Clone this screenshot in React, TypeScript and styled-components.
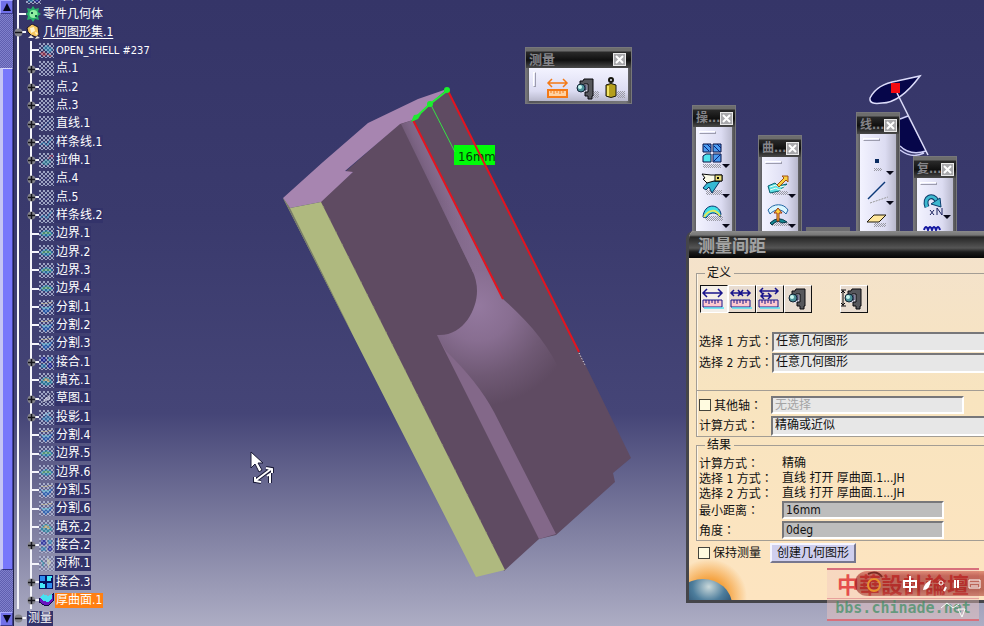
import React from "react";
import styled, { createGlobalStyle, css } from "styled-components";

const Global = createGlobalStyle`
  * { box-sizing: border-box; }
  body {
    margin: 0;
    overflow: hidden;
    font: 12px/15px "DejaVu Sans Condensed", "Noto Sans CJK SC", sans-serif;
    color: #111;
  }
  button, input, select { font: inherit; color: inherit; margin: 0; }
  ul { list-style: none; margin: 0; padding: 0; }
`;

const Workspace = styled.main`
  position: relative;
  display: flex;
  height: 100vh;
  overflow: hidden;
  background: linear-gradient(#353568 0%, #3a3a6d 35%, #454577 66%, #77779b 82%, #adadc4 100%);
`;

/* ---------- scroll bar ---------- */

const ScrollBar = styled.div`
  display: flex;
  flex-direction: column;
  width: 14px;
  flex: none;
  border-right: 1px solid #22224c;
  background: repeating-conic-gradient(#5f5fb0 0% 25%, #8080cc 0% 50%) 0 0 / 2px 2px;
`;

const ScrollButton = styled.button`
  height: 14px;
  padding: 0;
  border: 1px solid;
  border-color: #aaaaff #3c3c88 #3c3c88 #aaaaff;
  background: #7070e8;
  display: grid;
  place-items: center;
`;

const ScrollTrack = styled.div`
  flex: 1;
  display: grid;
  grid-template-rows: 54fr 502fr 42fr;
`;

const ScrollThumb = styled.div`
  grid-row: 2;
  background: #7777fb;
  border: 1px solid;
  border-width: 1px 1px 1px 3px;
  border-color: #d8d8ff #4040a0 #30307a #c4c4f4;
`;

/* ---------- specification tree ---------- */

const Tree = styled.ul`
  flex: none;
  margin: -13px 0 0 3px;
  color: #fff;
  white-space: nowrap;
`;

const Branch = styled.li<{ $last?: boolean }>`
  border-left: 2px solid ${(p) => (p.$last ? "transparent" : "#f4f4fa")};
`;

const Leaves = styled.ul`
  margin-left: 11px;
  border-left: 2px solid #f4f4fa;

  & > li:nth-child(3n + 2) { height: 19px; }
`;

const Row = styled.div`
  display: flex;
  align-items: center;
  height: 18px;
`;

const Leaf = styled.li`
  display: flex;
  align-items: center;
  height: 18px;
`;

const Tick = styled.span`
  width: 7px;
  height: 2px;
  flex: none;
  background: #f4f4fa;
  position: relative;
`;

const Expander = styled.button`
  position: absolute;
  left: -5px;
  top: -3px;
  width: 9px;
  height: 9px;
  padding: 0;
  border: 0;
  background: none;
  svg { display: block; }
`;

const Label = styled.span<{ $kind?: "current" | "selected" | "latin" }>`
  margin-left: 1px;
  padding: 0 1px;
  line-height: 15px;
  background: #33336a;
  ${(p) => p.$kind === "current" && css`text-decoration: underline; text-underline-offset: 2px;`}
  ${(p) => p.$kind === "selected" && css`background: #ff7f11;`}
  ${(p) => p.$kind === "latin" && css`font-size: 11px;`}
`;

const Glyph = styled.svg`
  display: block;
  flex: none;
`;

type Kind = "shell" | "point" | "line" | "spline" | "extrude" | "edge" | "split" | "join" | "fill" | "sketch" | "project" | "mirror" | "joinOn" | "thick";

const leaves: [string, Kind, boolean][] = [
  ["OPEN_SHELL #237", "shell", false],
  ["点.1", "point", true],
  ["点.2", "point", true],
  ["点.3", "point", true],
  ["直线.1", "line", true],
  ["样条线.1", "spline", true],
  ["拉伸.1", "extrude", true],
  ["点.4", "point", true],
  ["点.5", "point", true],
  ["样条线.2", "spline", true],
  ["边界.1", "edge", false],
  ["边界.2", "edge", false],
  ["边界.3", "edge", false],
  ["边界.4", "edge", false],
  ["分割.1", "split", false],
  ["分割.2", "split", false],
  ["分割.3", "split", false],
  ["接合.1", "join", true],
  ["填充.1", "fill", false],
  ["草图.1", "sketch", true],
  ["投影.1", "project", true],
  ["分割.4", "split", false],
  ["边界.5", "edge", false],
  ["边界.6", "edge", false],
  ["分割.5", "split", false],
  ["分割.6", "split", false],
  ["填充.2", "fill", false],
  ["接合.2", "join", true],
  ["对称.1", "mirror", false],
  ["接合.3", "joinOn", true],
  ["厚曲面.1", "thick", true],
];

const shapes: Record<Kind, React.ReactNode> = {
  shell: <><path d="M3 5l5-3 6 4-4 4z" fill="#2f9fc0" /><path d="M1 10l4-2 3 4-4 2z" fill="#c03038" /><path d="M9 11l4 1-2 2z" fill="#d05050" /></>,
  point: <path d="M6 7h3v2H6z" fill="#2a2a78" />,
  line: <path d="M3 12L12 4" stroke="#23407c" strokeWidth="1.5" />,
  spline: <path d="M2 10c3-7 5 3 7-1s2-5 4-5" fill="none" stroke="#2488b8" strokeWidth="1.5" />,
  extrude: <><path d="M2 10l5-4 5 2-4 5z" fill="#32a0a8" /><path d="M9 6l4-4M10 2h3v3" stroke="#c03040" fill="none" /></>,
  edge: <><path d="M1 8c3-5 9-5 13-1-3 5-9 5-13 1z" fill="#1590b8" /><path d="M3 8c3-2 6-2 9 0" stroke="#58c868" strokeWidth="2" fill="none" /></>,
  split: <><path d="M1 6c4 2 8 2 13-1l-3 6-5 3z" fill="#1468c8" /><path d="M3 8c3 1 5 1 8-1" stroke="#58c8e0" strokeWidth="2" fill="none" /><path d="M2 4c3-3 5 2 7-1l4-1" stroke="#e0d088" fill="none" /></>,
  join: <><path d="M2 2h5v5H2zM9 8h4v5H9z" fill="#1018a8" /><path d="M9 2h4v4H9zM2 9h5v4H2z" fill="#1c88b8" /></>,
  fill: <><path d="M1 10c2-8 10-8 13 0l-6 3z" fill="#1898a8" /><path d="M4 8c3-5 6-3 7 1z" fill="#dcc860" /></>,
  sketch: <path d="M3 12l2-4 7-6-1 7-5 2z" fill="#f0f0fa" stroke="#23234c" />,
  project: <><path d="M2 9l6-4 6 3-6 4z" fill="#2888c0" /><path d="M4 5l7-2" stroke="#90d8f0" strokeWidth="2" /></>,
  mirror: <><path d="M2 4l4 3-2 5z" fill="#2a98a8" /><path d="M8 2l4 4-3 7z" fill="#e8e8b8" /></>,
  joinOn: <><path d="M0 0h14v14H0z" fill="#061060" /><path d="M1 1h5v5H1zM8 8h5v5H8z" fill="#2d8cf0" /><path d="M8 1h5l-1 5H8zM1 8l5 1v4H1z" fill="#46e8f8" /></>,
  thick: <><path d="M0 6l4-4 5 2 5-3v7l-5 5-4-1-5-3z" fill="#6a14c0" stroke="#120a48" /><path d="M1 5l3-4 5 2 4-2v4l-4 4-4-1-3-2z" fill="#48e0f0" /></>,
};

function FeatureIcon({ kind }: { kind: Kind }) {
  const solid = kind === "joinOn" || kind === "thick";
  return (
    <Glyph width="15" height="15" viewBox="0 0 15 15" aria-hidden="true" shapeRendering="crispEdges">
      {!solid && <path d="M0 0h15v15H0z" fill="url(#screen)" />}
      <g opacity={solid ? 1 : 0.6}>{shapes[kind]}</g>
      {!solid && <path d="M0 0h15v15H0z" fill="url(#screen)" opacity="0.5" />}
    </Glyph>
  );
}

function Toggle({ open, name }: { open?: boolean; name: string }) {
  return (
    <Expander aria-label={name}>
      <svg width="9" height="9" viewBox="0 0 9 9">
        <circle cx="4.5" cy="4.5" r="4" fill="#85858c" />
        <path d={open ? "M1 4.5h7" : "M1 4.5h7M4.5 1v7"} stroke="#15151c" strokeWidth="1.5" />
      </svg>
    </Expander>
  );
}

/* ---------- drawings on the canvas ---------- */

const Part = styled.svg`
  position: absolute;
  left: 270px;
  top: 80px;
`;

const Compass = styled.svg`
  position: absolute;
  left: 864px;
  top: 70px;
`;

const Pointer = styled.svg`
  position: absolute;
  left: 249px;
  top: 450px;
`;

function PartDrawing() {
  return (
    <Part width="370" height="505" viewBox="270 80 370 505" role="img" aria-label="16mm">
      <defs>
        <radialGradient id="fillet" gradientUnits="userSpaceOnUse" cx="478" cy="306" r="100">
          <stop offset="0" stopColor="#94799f" />
          <stop offset="0.35" stopColor="#886e91" />
          <stop offset="0.7" stopColor="#6f5974" />
          <stop offset="1" stopColor="#5f4b62" />
        </radialGradient>
        <linearGradient id="strip" gradientUnits="userSpaceOnUse" x1="424" y1="200" x2="452" y2="188">
          <stop offset="0" stopColor="#66516b" />
          <stop offset="0.5" stopColor="#7c6484" />
          <stop offset="1" stopColor="#8b7094" />
        </linearGradient>
        <linearGradient id="stripFade" gradientUnits="userSpaceOnUse" x1="0" y1="200" x2="0" y2="270">
          <stop offset="0" stopColor="#886e91" stopOpacity="0" />
          <stop offset="1" stopColor="#886e91" />
        </linearGradient>
      </defs>
      <path d="M318 203L353 172L344 173L400 123L413 119L447 90L579 352L631 458L613 473L615 482L556 535L539 539L504 571z" fill="#5f4b62" />
      <path d="M283 198L323 162L368 123L418 99L447 89L430 104L413 120L400 124L345 171L353 172L321 202L290 208z" fill="#a785b0" />
      <path d="M283 198L290 208L321 202L505 570L476 577L400 428z" fill="#afb97f" />
      <path d="M283 198L290 208L352 333L344 318z" fill="#777b68" />
      <path d="M401 124L413 120L489 272L473 272z" fill="url(#strip)" />
      <path d="M401 124L413 120L489 272L473 272z" fill="url(#stripFade)" />
      <path d="M472 270Q477 280 477 291C477 310 463 337 437 335L485 431L530 416Q567 400 563 378C550 346 530 323 503 299L488 270z" fill="url(#fillet)" />
      <path d="M437 335L446 351Q478 382 494 412L556 534L539 539z" fill="#836889" />
      <path d="M323 206L505 570" stroke="#8f946f" strokeWidth="1" strokeDasharray="2 12" />
      <path d="M579 353l6 12" stroke="#fff" strokeDasharray="1 2" />
      <path d="M454 145h41v20h-41z" fill="#00fb08" />
      <text x="458" y="161" fontSize="13" fill="#053a05" fontFamily="DejaVu Sans Condensed, sans-serif">16mm</text>
      <path d="M413 120L503 299M448 91L579 352" stroke="#e3141f" strokeWidth="2" />
      <path d="M413 120L430 104L448 90" stroke="#22ee33" strokeWidth="2" fill="none" />
      <path d="M431 105L455 152" stroke="#35e044" strokeWidth="1" />
      <path d="M411 122l3-7 7-1-3 5z" fill="#1eea32" />
      <circle cx="447" cy="90" r="3" fill="#19ef2d" />
      <circle cx="430" cy="104" r="3" fill="#19ef2d" />
    </Part>
  );
}

function CompassDrawing() {
  return (
    <Compass width="70" height="90" viewBox="864 70 70 90" aria-hidden="true">
      <path d="M900 118L907 116L926 151Q911 156 900 148z" fill="#06064a" />
      <path d="M900 119L908 116M900 146Q910 156 926 151M900 150Q912 159 924 153" fill="none" stroke="#cfcff8" strokeWidth="1.5" />
      <path d="M920 76Q900 103 882 103Q869 105 870 98Q877 84 897 81z" fill="#06064a" stroke="#dcdcfa" strokeWidth="1.5" />
      <path d="M897 93L928 155" stroke="#dcdcfa" strokeWidth="1.5" />
      <path d="M891 83h9v10h-9z" fill="#f30b12" />
    </Compass>
  );
}

/* ---------- floating toolbars ---------- */

const Palette = styled.section<{ $x: number; $y: number; $wide?: boolean }>`
  position: absolute;
  left: ${(p) => p.$x}px;
  top: ${(p) => p.$y}px;
  width: ${(p) => (p.$wide ? 107 : 44)}px;
  border: 1px solid #77777a;
  background: linear-gradient(90deg, #77777a, #55555a 4px, #77777a calc(100% - 5px), #4c4c4f);
  padding-bottom: 2px;
`;

const PaletteBar = styled.header<{ $wide?: boolean }>`
  display: flex;
  align-items: center;
  justify-content: space-between;
  height: ${(p) => (p.$wide ? 20 : 21)}px;
  padding: 3px 5px 0 3px;
  background: linear-gradient(#6d6d6d 0, #6d6d6d 3px, #2a2a2a 4px, #101010 60%, #4a4a4a);
  color: #85858a;
  font-size: ${(p) => (p.$wide ? 13 : 12)}px;
  font-weight: bold;
  white-space: nowrap;
`;

const Close = styled.button`
  flex: none;
  width: 13px;
  height: 13px;
  padding: 0;
  border: 1px solid #e9e9e9;
  background: #a9a9ac;
  display: grid;
  place-items: center;
`;

const PaletteBody = styled.div<{ $wide?: boolean }>`
  display: flex;
  flex-direction: ${(p) => (p.$wide ? "row" : "column")};
  align-items: ${(p) => (p.$wide ? "center" : "stretch")};
  height: ${(p) => (p.$wide ? 33 : 150)}px;
  margin: 0 3px;
  padding: ${(p) => (p.$wide ? "8px 4px 0" : "4px 3px")};
  background: linear-gradient(${(p) => (p.$wide ? "180deg" : "90deg")}, #f3f3ff, #dcdcf2 70%, #b8b8cc);
`;

const Grip = styled.span<{ $wide?: boolean }>`
  flex: none;
  width: ${(p) => (p.$wide ? 3 : 17)}px;
  height: ${(p) => (p.$wide ? 15 : 3)}px;
  margin: ${(p) => (p.$wide ? "-18px 9px 0 0" : "0 0 7px")};
  border: 1px solid;
  border-color: #fff #9c9cae #9c9cae #fff;
`;

const Tool = styled.button<{ $wide?: boolean }>`
  flex: none;
  width: ${(p) => (p.$wide ? 27 : 32)}px;
  height: 30px;
  padding: 0;
  border: 0;
  background: none;
  display: grid;
  place-items: center;
`;

const PaletteEdge = styled.div`
  position: absolute;
  left: 806px;
  top: 227px;
  width: 44px;
  height: 10px;
  background: #6c6c70;
`;

function Cross() {
  return (
    <svg width="9" height="9" viewBox="0 0 9 9">
      <path d="M1 1l7 7M8 1L1 8" stroke="#fff" strokeWidth="2" />
    </svg>
  );
}

const more = <path d="M23 22h8l-4 4z" fill="#080818" />;
const hatch = (d: string) => <path d={d} fill="url(#hatch)" />;

function Caliper({ span }: { span?: boolean }) {
  return (
    <g>
      <path d="M9 7h6v9H9z" fill="#dcdcea" />
      <path d="M7 4h3l1-2h9v17h-1v3h-4v-3h-3v-4h3V7h-4l-1 2H7z" fill="#56575c" stroke="#08080c" />
      <path d="M12 8v5h1V8" fill="none" stroke="#25254c" />
      <circle cx="8" cy="11" r="4" fill="#4b8f98" stroke="#123" />
      <circle cx="7" cy="10" r="2" fill="#c9f7f0" />
      {span && <path d="M0 3h5M0 19h5M2 3v16M0 6l2-2 2 2M0 16l2 2 2-2" stroke="#08080c" fill="none" />}
    </g>
  );
}

function Ruler({ mode = 0, accent }: { mode?: number; accent?: boolean }) {
  const ink = accent ? "#f47a16" : "#17148c";
  return (
    <g fill="none" stroke={ink} strokeWidth="1.5">
      {mode === 0 && <path d="M2 6h19M6 2L2 6l4 4M17 2l4 4-4 4" />}
      {mode === 1 && <path d="M2 6h19M5 3L2 6l3 3M18 3l3 3-3 3M9 3l5 6M14 3L9 9" />}
      {mode === 2 && <path d="M3 4h18M6 1L3 4l3 3M18 1l3 3-3 3M4 9h10M7 6L4 9l3 3M11 6l3 3-3 3" />}
      <path d="M2 13h19v7H2z" fill={accent ? "#ffd2a2" : "#ffc9cf"} strokeWidth={accent ? 2 : 1} />
      <path d="M5 13v3M8 13v4M11 13v3M14 13v4M17 13v3" strokeWidth="1" />
      {!accent && <path d="M3 21h20" stroke="#55dff0" />}
    </g>
  );
}

function Art({ children, wide }: { children: React.ReactNode; wide?: boolean }) {
  const w = wide ? 26 : 32;
  return <svg width={w} height={wide ? 26 : 28} viewBox={wide ? "0 -1 26 26" : "0 0 32 28"}>{children}</svg>;
}

const gridArt = (
  <>
    {hatch("M4 22h18v4H4z")}
    <path d="M4 2h8v8H4zM14 2h8v8h-8zM14 12h8v8h-8z" fill="#4a9cf0" stroke="#061044" />
    <path d="M4 14l3-2h5v8H4z" fill="#4ee4ee" stroke="#061044" />
    <path d="M5 4l5 5M8 2l4 4M15 4l6 6M18 2l4 4M15 19l6-6" stroke="#072078" />
  </>
);
const cutArt = (
  <>
    {hatch("M7 18h16v5H7z")}
    <path d="M4 16l6-7 11 0-8 12-3-6-3 3z" fill="#35b9d4" stroke="#07305c" />
    <path d="M3 2l9 1h11v6h-8l-7 2-4-4 2-1z" fill="#fbfbe8" stroke="#080808" />
    <path d="M16 3h7v6h-7z" fill="#ece17a" stroke="#080808" />
    <path d="M19 5v2" stroke="#080808" strokeWidth="2" />
  </>
);
const domeArt = (
  <>
    {hatch("M7 14h17v5H7z")}
    <path d="M4 15C5 1 20 1 22 12l-1 3C16 9 11 10 7 16z" fill="#3fdfe8" stroke="#08306c" />
    <path d="M5 15C10 7 17 7 21 14" stroke="#e2e85a" strokeWidth="2" fill="none" />
  </>
);
const offsetArt = (
  <>
    {hatch("M7 19h16v4H7z")}
    <path d="M3 14l7-3 3 3 9-2-8 7-9 2z" fill="#5ee0e4" stroke="#086070" />
    <path d="M5 15l6-2 3 2 7-1M5 18l6-2 3 2 4-1" stroke="#f0ffef" fill="none" />
    <path d="M12 13l7-7-2-2h6v6l-2-2-7 7z" fill="#fad13f" stroke="#a05012" />
  </>
);
const surfArt = (
  <>
    {hatch("M6 20h18v4H6z")}
    <path d="M3 8C8 1 19 1 23 8l-2 4C16 6 10 7 5 12z" fill="#d9f6ff" stroke="#2366a4" />
    <path d="M5 21q8-8 17-1l-5 1q-5-4-10 2z" fill="#138590" stroke="#053848" />
    <path d="M12 19v-8H9l4-5 4 5h-3v8z" fill="#ffd13a" stroke="#9c3410" />
  </>
);
const pointArt = <>{hatch("M11 19h8v3h-8z")}<path d="M12 10h4v4h-4z" fill="#082a60" /></>;
const lineArt = <><path d="M5 20L22 3" stroke="#0b3878" strokeWidth="1.5" /><path d="M7 24l18-6" stroke="#999" strokeDasharray="2 1" /></>;
const planeArt = <>{hatch("M11 14h12v4H11z")}<path d="M4 13l7-7h12l-7 7z" fill="#ffe79c" stroke="#201a0c" /></>;
const repeatArt = (
  <>
    <path d="M7 14C3 4 13 0 17 8" fill="none" stroke="#0c3d6c" strokeWidth="5" />
    <path d="M7 14C3 4 13 0 17 8" fill="none" stroke="#3db7ce" strokeWidth="3" />
    <path d="M11 11l9-6 1 9z" fill="#3db7ce" stroke="#0c3d6c" />
    <path d="M10 17l4 5M14 17l-4 5M17 22v-7l5 7v-7" stroke="#18205c" fill="none" />
  </>
);
const waveArt = <path d="M4 7q2-6 4 0q2-6 4 0q2-6 4 0q2-6 4 0" stroke="#1418a0" strokeWidth="2" fill="none" />;

const palettes: { x: number; y: number; title: string; tools: [string, React.ReactNode][] }[] = [
  { x: 692, y: 105, title: "操...", tools: [["接合", gridArt], ["分割", cutArt], ["边界", domeArt]] },
  { x: 758, y: 135, title: "曲...", tools: [["拉伸", offsetArt], ["扫掠", surfArt]] },
  { x: 856, y: 112, title: "线...", tools: [["点", pointArt], ["直线", lineArt], ["平面", planeArt]] },
  { x: 913, y: 156, title: "复...", tools: [["重复", repeatArt], ["阵列", waveArt]] },
];

/* ---------- measure dialog ---------- */

const Dialog = styled.form`
  position: absolute;
  left: 686px;
  top: 231px;
  right: -12px;
  border: solid #45454a;
  border-width: 0 0 3px 3px;
  border-radius: 8px 0 0 0;
  background: radial-gradient(circle at 20px 366px, #f5a443 18px, #fbe1b800 38px), linear-gradient(#f3e2cd, #f8e4bf 45%, #fde4c0);
  overflow: hidden;
`;

const DialogTitle = styled.h1`
  margin: 0 0 7px -3px;
  height: 27px;
  padding: 3px 12px;
  background: linear-gradient(#8a8a8a 0, #777 4px, #262626 6px, #555 17px, #1c1c1c 21px, #050505);
  color: #a2a2a2;
  font-size: 17px;
  line-height: 24px;
  font-weight: bold;
`;

const Group = styled.fieldset`
  margin: 0 0 0 7px;
  padding: 0;
  min-width: 0;
  border: 1px solid #a39d94;
  box-shadow: inset 1px 0 #fff6e6;

  legend {
    margin-left: 8px;
    padding: 0 3px 0 2px;
    height: 16px;
    line-height: 16px;
  }
`;

const ModeBar = styled.div`
  display: flex;
  padding: 4px 0 18px 3px;
`;

const Mode = styled.button<{ $on?: boolean; $apart?: boolean }>`
  width: 28px;
  height: 28px;
  padding: 0;
  margin-left: ${(p) => (p.$apart ? 28 : 0)}px;
  border: 1px solid;
  border-color: ${(p) => (p.$on ? "#111 #fff #fff #111" : "#fff #111 #111 #fff")};
  background: ${(p) => (p.$on ? "#f4efe9" : "#e8dcd0")};
  display: grid;
  place-items: center;
`;

const FormRow = styled.div<{ $h: number; $col: number }>`
  display: grid;
  grid-template-columns: ${(p) => p.$col}px 1fr;
  align-items: center;
  height: ${(p) => p.$h}px;
  padding-left: 2px;
  white-space: nowrap;
`;

const Section = styled.div`
  margin-top: 17px;
  padding-top: 4px;
  border-top: 1px solid #a39d94;
`;

const sunken = css`
  border: 2px solid;
  border-color: #77777a #fff #fff #77777a;
  border-radius: 0;
  padding: 0 2px;
`;

const Choice = styled.select`
  ${sunken}
  appearance: none;
  width: 100%;
  height: 20px;
  background: #e7e7e7;
`;

const AxisBox = styled.input`
  ${sunken}
  width: 193px;
  height: 18px;
  background: #e7e7e7;
  &::placeholder { color: #a5a5a5; opacity: 1; }
`;

const ResultBox = styled.input`
  ${sunken}
  width: 162px;
  height: 18px;
  background: #bdbdbd;
`;

const CheckLabel = styled.label`
  display: flex;
  align-items: center;
  gap: 3px;
`;

const Check = styled.input`
  appearance: none;
  width: 12px;
  height: 12px;
  border: 1px solid #44443c;
  background: #fffbe0;
`;

const WideColon = styled.span`
  font-family: "Noto Sans CJK TC", sans-serif;
`;

const Results = styled.div`
  padding: 2px 0 0;
`;

const Footer = styled.footer`
  display: flex;
  align-items: center;
  gap: 9px;
  padding: 0 0 0 9px;
  height: 24px;
`;

const Action = styled.button`
  height: 20px;
  padding: 0 5px;
  border: 2px solid;
  border-color: #f4f4ff #77778e #77778e #f4f4ff;
  background: #cfcfee;
  line-height: 15px;
  white-space: nowrap;
`;

const Planet = styled.svg`
  display: block;
  margin-top: 7px;
`;

function Caption({ children }: { children: React.ReactNode }) {
  return <span>{children}<WideColon>：</WideColon></span>;
}

/* ---------- input bar and forum stamp ---------- */

const InputBar = styled.div`
  position: absolute;
  left: 855px;
  right: 0;
  top: 571px;
  height: 25px;
  border-radius: 12px 0 0 12px;
  background: linear-gradient(#d05a4a, #a01c18 20%, #8c1712 75%, #b0463c);
  opacity: 0.6;
`;

const Stamp = styled.div`
  position: absolute;
  left: 827px;
  top: 568px;
  width: 152px;
  height: 53px;
  border: solid #d8707c;
  border-width: 2px 0;
  background: #f0c8c06e;
  text-align: center;
  white-space: nowrap;
`;

const StampName = styled.div`
  height: 29px;
  font: bold 22px/27px "Noto Sans CJK TC", sans-serif;
  color: #e0282ccc;
  border-bottom: 1px solid #d8707c88;
`;

const StampUrl = styled.div`
  font: bold 15px/19px "DejaVu Sans Mono", monospace;
  color: #3f8f64b8;
`;

const InputMarks = styled.svg`
  position: absolute;
  left: 860px;
  top: 571px;
`;

export default function App() {
  return (
    <Workspace>
      <Global />
      <ScrollBar>
        <ScrollButton aria-label="向上">
          <svg width="8" height="8"><path d="M4 0l4 8H0z" fill="#05051c" /></svg>
        </ScrollButton>
        <ScrollTrack><ScrollThumb /></ScrollTrack>
        <ScrollButton aria-label="向下">
          <svg width="8" height="8"><path d="M0 0h8L4 8z" fill="#05051c" /></svg>
        </ScrollButton>
      </ScrollBar>

      <Tree>
        <Branch>
          <Row><Tick /><FeatureIcon kind="join" /><Label>zx 平面</Label></Row>
          <Row>
            <Tick />
            <Glyph width="15" height="16" viewBox="0 0 15 16" aria-hidden="true">
              <path d="M7 0l2 3 4-1-1 4 3 2-3 2 1 4-4-1-2 3-2-3-4 1 1-4-2-2 2-2-1-4 4 1z" fill="#27b06a" />
              <circle cx="7.5" cy="8" r="4" fill="#8ff0a0" />
              <path d="M5 6h2v2H5zM9 9h2v2H9z" fill="#126048" />
            </Glyph>
            <Label>零件几何体</Label>
          </Row>
          <Row>
            <Tick><Toggle open name="几何图形集.1" /></Tick>
            <Glyph width="15" height="16" viewBox="0 0 15 16" aria-hidden="true">
              <path d="M1 4l5-4 6 3 1 8-3 2-5-2-3-3z" fill="#f7c860" stroke="#1a1428" />
              <path d="M4 4l4-1 1 4-4 2zM9 8l3 1-2 2z" fill="#fff4d0" />
              <path d="M2 14l3-3 3 3zM9 15l2-3 3 2z" fill="#ece6e0" />
            </Glyph>
            <Label $kind="current">几何图形集.1</Label>
          </Row>
          <Leaves>
            {leaves.map(([name, kind, expandable]) => (
              <Leaf key={name}>
                <Tick>{expandable && <Toggle name={name} />}</Tick>
                <FeatureIcon kind={kind} />
                <Label $kind={kind === "thick" ? "selected" : kind === "shell" ? "latin" : undefined}>{name}</Label>
              </Leaf>
            ))}
          </Leaves>
        </Branch>
        <Branch $last>
          <Row><Tick><Toggle open name="测量" /></Tick><Label>测量</Label></Row>
        </Branch>
      </Tree>

      <svg width="0" height="0" aria-hidden="true">
        <defs>
          <pattern id="screen" width="4" height="4" patternUnits="userSpaceOnUse">
            <path d="M0 0h2v2H0zM2 2h2v2H2z" fill="#b4bcd8" fillOpacity="0.7" />
            <path d="M2 0h2v2H2zM0 2h2v2H0z" fill="#33336a" fillOpacity="0.15" />
          </pattern>
          <pattern id="hatch" width="2" height="2" patternUnits="userSpaceOnUse">
            <path d="M0 0h1v1H0zM1 1h1v1H1z" fill="#9a9aa4" />
          </pattern>
        </defs>
      </svg>

      <PartDrawing />
      <CompassDrawing />

      <Pointer width="28" height="36" viewBox="0 0 28 36" aria-hidden="true">
        <path d="M2 2v16l4-4 4 8 3-2-4-7h5z" fill="#fff" stroke="#1a1a38" />
        <path d="M6 31L22 19M6 27v4l6 1M17 18l6 1v4M18 26l3-2v9" stroke="#1a1a38" strokeWidth="4" fill="none" />
        <path d="M6 31L22 19M6 27v4l6 1M17 18l6 1v4M18 26l3-2v9" stroke="#fff" strokeWidth="2" fill="none" />
      </Pointer>

      <Palette $x={525} $y={47} $wide>
        <PaletteBar $wide>测量<Close aria-label="关闭"><Cross /></Close></PaletteBar>
        <PaletteBody $wide>
          <Grip $wide />
          <Tool $wide aria-label="测量间距"><Art wide><Ruler accent /></Art></Tool>
          <Tool $wide aria-label="测量项"><Art wide>{hatch("M20 14h6v7h-6z")}<Caliper /></Art></Tool>
          <Tool $wide aria-label="测量惯量">
            <Art wide>
              {hatch("M17 14h8v7h-8z")}
              <circle cx="11" cy="3" r="2" fill="none" stroke="#15150c" strokeWidth="2" />
              <path d="M6 8q5-3 10 0v11q-5 3-10 0z" fill="#b59f1c" stroke="#15150c" />
              <path d="M8 9v10" stroke="#f2e364" strokeWidth="2" />
            </Art>
          </Tool>
        </PaletteBody>
      </Palette>

      <PaletteEdge />
      {palettes.map((p) => (
        <Palette key={p.title} $x={p.x} $y={p.y}>
          <PaletteBar>{p.title}<Close aria-label="关闭"><Cross /></Close></PaletteBar>
          <PaletteBody>
            <Grip />
            {p.tools.map(([name, art]) => (
              <Tool key={name} aria-label={name}><Art>{art}{more}</Art></Tool>
            ))}
          </PaletteBody>
        </Palette>
      ))}

      <Dialog onSubmit={(e) => e.preventDefault()}>
        <DialogTitle>测量间距</DialogTitle>
        <Group>
          <legend>定义</legend>
          <ModeBar>
            <Mode type="button" $on aria-label="间距"><Art wide><Ruler /></Art></Mode>
            <Mode type="button" aria-label="链式"><Art wide><Ruler mode={1} /></Art></Mode>
            <Mode type="button" aria-label="扇形"><Art wide><Ruler mode={2} /></Art></Mode>
            <Mode type="button" aria-label="测量项"><Art wide><Caliper /></Art></Mode>
            <Mode type="button" $apart aria-label="厚度"><Art wide><Caliper span /></Art></Mode>
          </ModeBar>
          <FormRow as="label" $h={21} $col={73}>
            <Caption>选择 1 方式</Caption>
            <Choice defaultValue="a"><option value="a">任意几何图形</option></Choice>
          </FormRow>
          <FormRow as="label" $h={21} $col={73}>
            <Caption>选择 2 方式</Caption>
            <Choice defaultValue="a"><option value="a">任意几何图形</option></Choice>
          </FormRow>
          <Section>
            <FormRow $h={20} $col={72}>
              <CheckLabel><Check type="checkbox" /><Caption>其他轴</Caption></CheckLabel>
              <AxisBox aria-label="其他轴" placeholder="无选择" disabled />
            </FormRow>
            <FormRow as="label" $h={21} $col={72}>
              <Caption>计算方式</Caption>
              <Choice defaultValue="a"><option value="a">精确或近似</option></Choice>
            </FormRow>
          </Section>
        </Group>
        <Group>
          <legend>结果</legend>
          <Results>
            <FormRow $h={15} $col={83}><Caption>计算方式</Caption><span>精确</span></FormRow>
            <FormRow $h={15} $col={83}><Caption>选择 1 方式</Caption><span>直线 打开 厚曲面.1...JH</span></FormRow>
            <FormRow $h={15} $col={83}><Caption>选择 2 方式</Caption><span>直线 打开 厚曲面.1...JH</span></FormRow>
            <FormRow as="label" $h={20} $col={83}><Caption>最小距离</Caption><ResultBox readOnly value="16mm" /></FormRow>
            <FormRow as="label" $h={20} $col={83}><Caption>角度</Caption><ResultBox readOnly value="0deg" /></FormRow>
          </Results>
        </Group>
        <Footer>
          <CheckLabel><Check type="checkbox" />保持测量</CheckLabel>
          <Action type="button">创建几何图形</Action>
        </Footer>
        <Planet width="48" height="28" viewBox="0 0 48 28" aria-hidden="true">
          <defs>
            <radialGradient id="globe" cx="0.6" cy="0.15" r="0.7">
              <stop offset="0" stopColor="#c9d8da" />
              <stop offset="0.4" stopColor="#4d7d9c" />
              <stop offset="1" stopColor="#102c4c" />
            </radialGradient>
          </defs>
          <ellipse cx="14" cy="33" rx="29" ry="26" fill="url(#globe)" />
        </Planet>
      </Dialog>

      <Stamp>
        <StampName>中華設計論壇</StampName>
        <StampUrl>bbs.chinade.net</StampUrl>
      </Stamp>
      <InputBar />
      <InputMarks width="124" height="50" viewBox="860 571 124 50" aria-hidden="true">
        <circle cx="874" cy="585" r="6" fill="none" stroke="#e9912c" strokeWidth="2" />
        <path d="M868 574q9-4 14 3" fill="none" stroke="#7a2a22" strokeWidth="2" />
        <path d="M904 581h12v6h-12zM910 576v16" fill="none" stroke="#fff" strokeWidth="2" />
        <path d="M923 590q1-7 8-10-1 10-8 10z" fill="#fff" />
        <circle cx="941" cy="583" r="2" fill="none" stroke="#fff" />
        <path d="M946 587l-2 4M955 580v8M958 580v8" stroke="#fff" strokeWidth="2" />
        <path d="M969 580h11v8h-11zM970 583h9M971 586h7" fill="none" stroke="#fff" />
        <path d="M941 608l6-5 6 5 6-4M958 609h7l-3 8z" fill="none" stroke="#f8fff8" />
      </InputMarks>
    </Workspace>
  );
}
